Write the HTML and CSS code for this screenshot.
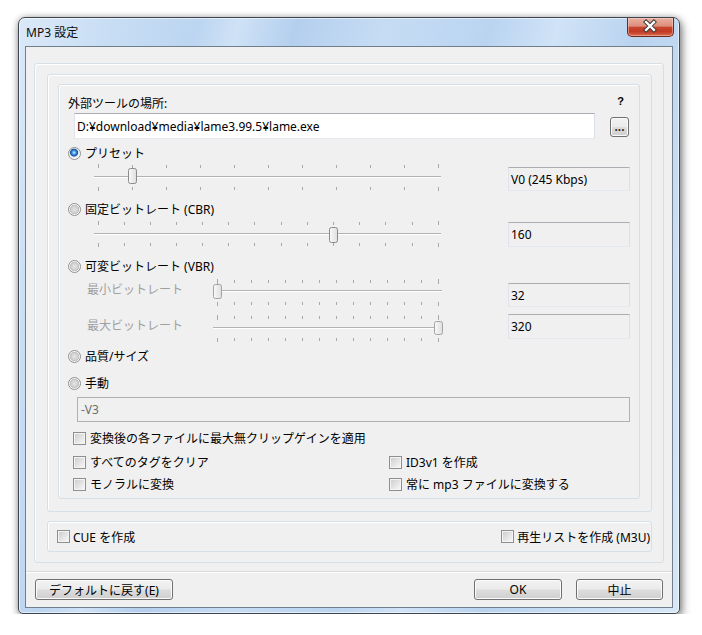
FILE: index.html
```html
<!DOCTYPE html>
<html lang="ja">
<head>
<meta charset="utf-8">
<title>MP3 設定</title>
<link rel="stylesheet" href="styles.css">
</head>
<body>
<div class="window">
  <div class="titlebar">
    <span class="title">MP3 設定</span>
    <div class="close">
      <svg width="47" height="19" viewBox="0 0 47 19">
        <path d="M19.5 5 L27.5 13 M27.5 5 L19.5 13" stroke="#3a3a3a" stroke-width="4.4" stroke-linecap="square" fill="none"/>
        <path d="M19.5 5 L27.5 13 M27.5 5 L19.5 13" stroke="#ffffff" stroke-width="2.4" stroke-linecap="square" fill="none"/>
      </svg>
    </div>
  </div>
  <div class="client">
    <div class="group frame-a">
      <div class="group frame-b">
        <div class="group frame-c">
          <div class="row r-label"><span>外部ツールの場所:</span><span class="help">?</span></div>
          <div class="row r-path">
            <div class="edit path">D:¥download¥media¥lame3.99.5¥lame.exe</div>
            <div class="btn browse"><span class="dots">...</span></div>
          </div>
          <div class="row radio-row r-radio1"><span class="radio checked"></span><span class="lbl">プリセット</span></div>
          <div class="srow s1">
            <svg class="track wide" width="358" height="30" viewBox="0 0 358 30">
              <rect x="7" y="13" width="347" height="1" fill="#b3b3b3"/>
              <rect x="7" y="14" width="347" height="1" fill="#ffffff"/>
              <g stroke="#a9a9a9" stroke-width="1">
                <path d="M11.5 1v4M45.5 2v3M79.5 2v3M113.5 2v3M147.5 2v3M181.5 2v3M215.5 2v3M249.5 2v3M283.5 2v3M317.5 2v3M351.5 1v4"/>
                <path d="M11.5 24v4M45.5 24v3M79.5 24v3M113.5 24v3M147.5 24v3M181.5 24v3M215.5 24v3M249.5 24v3M283.5 24v3M317.5 24v3M351.5 24v4"/>
              </g>
              <defs>
                <linearGradient id="th" x1="0" y1="0" x2="1" y2="0">
                  <stop offset="0" stop-color="#fafafa"/><stop offset="1" stop-color="#dedede"/>
                </linearGradient>
              </defs>
              <rect x="41.5" y="5.5" width="8" height="15" rx="2" fill="url(#th)" stroke="#8b8b8b"/>
            </svg>
            <div class="vbox b1">V0 (245 Kbps)</div>
          </div>
          <div class="row radio-row r-radio2"><span class="radio"></span><span class="lbl">固定ビットレート (CBR)</span></div>
          <div class="srow s2">
            <svg class="track wide" width="358" height="30" viewBox="0 0 358 30">
              <rect x="7" y="13" width="347" height="1" fill="#b3b3b3"/>
              <rect x="7" y="14" width="347" height="1" fill="#ffffff"/>
              <g stroke="#a9a9a9" stroke-width="1">
                <path d="M11.5 1v4M37.5 2v3M63.5 2v3M89.5 2v3M115.5 2v3M141.5 2v3M167.5 2v3M194.5 2v3M220.5 2v3M246.5 2v3M272.5 2v3M298.5 2v3M325.5 2v3M351.5 1v4"/>
                <path d="M11.5 23v4M37.5 23v3M63.5 23v3M89.5 23v3M115.5 23v3M141.5 23v3M167.5 23v3M194.5 23v3M220.5 23v3M246.5 23v3M272.5 23v3M298.5 23v3M325.5 23v3M351.5 23v4"/>
              </g>
              <rect x="242.5" y="7.5" width="8" height="15" rx="2" fill="url(#th)" stroke="#8b8b8b"/>
            </svg>
            <div class="vbox b2">160</div>
          </div>
          <div class="row radio-row r-radio3"><span class="radio"></span><span class="lbl">可変ビットレート (VBR)</span></div>
          <div class="srow s3">
            <span class="slabel l3">最小ビットレート</span>
            <svg class="track narrow" width="238" height="30" viewBox="0 0 238 30">
              <rect x="6" y="12" width="229" height="1" fill="#b3b3b3"/>
              <rect x="6" y="13" width="229" height="1" fill="#ffffff"/>
              <g stroke="#a9a9a9" stroke-width="1">
                <path d="M10.5 1v5M27.5 2v3M44.5 2v3M61.5 2v3M78.5 2v3M95.5 2v3M112.5 2v3M129.5 2v3M146.5 2v3M163.5 2v3M180.5 2v3M197.5 2v3M214.5 2v3M231.5 1v5"/>
                <path d="M10.5 24v4M27.5 24v3M44.5 24v3M61.5 24v3M78.5 24v3M95.5 24v3M112.5 24v3M129.5 24v3M146.5 24v3M163.5 24v3M180.5 24v3M197.5 24v3M214.5 24v3M231.5 24v4"/>
              </g>
              <rect x="6.5" y="6.5" width="8" height="14" rx="2" fill="url(#th)" stroke="#a3a3a3"/>
            </svg>
            <div class="vbox b3">32</div>
          </div>
          <div class="srow s4">
            <span class="slabel l4">最大ビットレート</span>
            <svg class="track narrow" width="238" height="30" viewBox="0 0 238 30">
              <rect x="6" y="15" width="229" height="1" fill="#b3b3b3"/>
              <rect x="6" y="16" width="229" height="1" fill="#ffffff"/>
              <g stroke="#a9a9a9" stroke-width="1">
                <path d="M10.5 3v5M27.5 4v3M44.5 4v3M61.5 4v3M78.5 4v3M95.5 4v3M112.5 4v3M129.5 4v3M146.5 4v3M163.5 4v3M180.5 4v3M197.5 4v3M214.5 4v3M231.5 3v5"/>
                <path d="M10.5 26v4M27.5 26v3M44.5 26v3M61.5 26v3M78.5 26v3M95.5 26v3M112.5 26v3M129.5 26v3M146.5 26v3M163.5 26v3M180.5 26v3M197.5 26v3M214.5 26v3M231.5 26v4"/>
              </g>
              <rect x="227.5" y="9.5" width="8" height="13" rx="2" fill="url(#th)" stroke="#a3a3a3"/>
            </svg>
            <div class="vbox b4">320</div>
          </div>
          <div class="row radio-row r-radio4"><span class="radio"></span><span class="lbl">品質/サイズ</span></div>
          <div class="row radio-row r-radio5"><span class="radio"></span><span class="lbl">手動</span></div>
          <div class="row r-manual"><div class="edit disabled">-V3</div></div>
          <div class="row check-row r-c1"><span class="check"></span><span class="lbl">変換後の各ファイルに最大無クリップゲインを適用</span></div>
          <div class="row check-row r-c2">
            <div class="cell"><span class="check"></span><span class="lbl">すべてのタグをクリア</span></div>
            <div class="cell right"><span class="check"></span><span class="lbl">ID3v1 を作成</span></div>
          </div>
          <div class="row check-row r-c3">
            <div class="cell"><span class="check"></span><span class="lbl">モノラルに変換</span></div>
            <div class="cell right"><span class="check"></span><span class="lbl">常に mp3 ファイルに変換する</span></div>
          </div>
        </div>
      </div>
      <div class="group cue">
        <div class="cell"><span class="check"></span><span class="lbl">CUE を作成</span></div>
        <div class="cell"><span class="check"></span><span class="lbl">再生リストを作成 (M3U)</span></div>
      </div>
    </div>
    <div class="separator"></div>
    <div class="buttons">
      <div class="btn wide">デフォルトに戻す(E)</div>
      <div class="spacer"></div>
      <div class="btn ok">OK</div>
      <div class="btn cancel">中止</div>
    </div>
  </div>
</div>
</body>
</html>
```

FILE: styles.css
```css
html, body {
  margin: 0;
  padding: 0;
  background: #ffffff;
}
body {
  font-family: "Noto Sans", "Noto Sans CJK JP", sans-serif;
  font-size: 12px;
  color: #000;
}
.window {
  box-sizing: border-box;
  margin: 17px 0 0 18px;
  width: 662px;
  height: 597px;
  border: 1px solid #3f4650;
  border-radius: 7px 7px 5px 5px;
  padding: 0 6px 5px 6px;
  background: linear-gradient(105deg, #dbe9f8 0%, #c7ddf4 12%, #bcd5f0 22%, #cfe2f6 27%, #b4cfee 34%, #c6dcf4 45%, #bad4f0 58%, #d0e3f7 66%, #b9d3ef 76%, #cadff5 88%, #d7e7f8 100%);
  box-shadow: inset 0 0 0 1px rgba(255,255,255,0.55), 2px 4px 10px rgba(0,0,0,0.45), 0 0 6px rgba(0,0,0,0.25);
}
.titlebar {
  height: 28px;
  display: flex;
  justify-content: space-between;
  align-items: flex-start;
}
.title {
  margin: 7px 0 0 1px;
  line-height: 15px;
  font-size: 12px;
  color: #0c0c0c;
}
.close {
  width: 47px;
  height: 19px;
  margin-right: -1px;
  box-sizing: border-box;
  border: 1px solid #6a2a20;
  border-top: none;
  border-radius: 0 0 5px 5px;
  background: linear-gradient(#eab0a2 0%, #dd8e7c 45%, #c8452d 52%, #c13a23 75%, #d9694c 100%);
  box-shadow: inset 0 0 0 1px rgba(255,220,210,0.45);
  display: flex;
}
.close svg { display: block; margin: -1px 0 0 -1px; }
.client {
  box-sizing: border-box;
  height: 562px;
  border: 1px solid #717f8d;
  background: #f0f0f0;
  padding: 16px 8px 0 8px;
}
.group {
  box-sizing: border-box;
  border: 1px solid #d5dfe5;
  border-radius: 3px;
  box-shadow: inset 1px 1px 0 #ffffff;
}
.frame-a {
  height: 500px;
  padding: 10px 11px 10px 12px;
}
.frame-b {
  height: 438px;
  padding: 9px 11px 12px 10px;
}
.frame-c {
  height: 415px;
  padding: 10px 9px 0 9px;
}
.row {
  display: flex;
  align-items: center;
}
.r-label {
  height: 15px;
  justify-content: space-between;
}
.help {
  font-weight: bold;
  font-family: "Liberation Sans", sans-serif;
  font-size: 11px;
  margin-right: 6px;
  margin-top: -4px;
}
.r-path {
  margin-top: 3px;
  height: 26px;
  align-items: flex-start;
}
.edit {
  box-sizing: border-box;
  border: 1px solid;
  border-color: #abadb3 #dbdfe6 #e3e9ef #e2e3ea;
  display: flex;
  align-items: center;
}
.path {
  margin-left: 6px;
  width: 521px;
  height: 26px;
  background: #fff;
  padding-left: 2px;
}
.btn {
  box-sizing: border-box;
  border: 1px solid #707070;
  border-radius: 3px;
  background: linear-gradient(#f2f2f2 0%, #ebebeb 48%, #dddddd 52%, #cfcfcf 100%);
  box-shadow: inset 0 0 0 1px #fbfbfb;
  display: flex;
  align-items: center;
  justify-content: center;
}
.browse {
  width: 19px;
  height: 20px;
  margin: 4px 0 0 15px;
  align-items: flex-start;
}
.dots {
  font-family: "Liberation Sans", sans-serif;
  font-size: 12px;
  font-weight: bold;
  line-height: 12px;
  color: #3a3020;
  margin-top: 3px;
}
.radio-row { height: 20px; }
.radio, .check {
  flex: none;
  box-sizing: border-box;
  width: 13px;
  height: 13px;
}
.radio {
  border-radius: 50%;
  border: 1px solid #8f9091;
  background: radial-gradient(circle at 50% 50%, #e4e4e4 0, #d2d2d2 3.2px, #bdbdbd 4.3px, #f7f7f7 5px);
}
.radio.checked {
  background: radial-gradient(circle at 46% 42%, #c8ecff 0, #5eb3f0 1.4px, #2a78cf 2.6px, #1b4f92 3.6px, #d9e3ec 4.3px, #f7f7f7 5px);
}
.lbl { margin-left: 4px; white-space: nowrap; }
.r-radio1 { margin-top: 4px; }
.r-radio2 { margin-top: 6px; }
.r-radio3 { margin-top: 6px; }
.r-radio4 { margin-top: 4px; }
.r-radio5 { margin-top: 7px; }
.srow {
  display: grid;
  grid-template-columns: 19px 120px 238px 1fr 122px;
  height: 30px;
  align-items: start;
}
.track { display: block; }
.track.wide { grid-column: 2 / 4; }
.track.narrow { grid-column: 3 / 4; }
.slabel {
  grid-column: 2 / 3;
  color: #a0a0a0;
  white-space: nowrap;
}
.vbox {
  grid-column: 5 / 6;
  box-sizing: border-box;
  border: 1px solid;
  border-color: #abadb3 #dbdfe6 #e3e9ef #e2e3ea;
  background: #f0f0f0;
  padding-left: 2px;
  display: flex;
  align-items: center;
  white-space: nowrap;
}
.b1 { margin-top: 4px; height: 24px; }
.s2 { margin-top: 1px; }
.b2 { margin-top: 2px; height: 25px; }
.s3 { margin-top: 2px; }
.l3 { line-height: 24px; }
.b3 { margin-top: 5px; height: 24px; }
.s4 { margin-top: 4px; }
.l4 { line-height: 28px; }
.b4 { margin-top: 2px; height: 25px; }
.r-manual {
  margin-top: 4px;
}
.edit.disabled {
  margin-left: 9px;
  flex: 1;
  height: 25px;
  border-color: #adb2b5;
  background: #f0f0f0;
  color: #6d6d6d;
  padding-left: 3px;
}
.check {
  border: 1px solid #8e8f8f;
  padding: 1px;
  background: linear-gradient(135deg, #cfcfcf, #f6f6f6) content-box, #f4f4f4;
}
.check-row { height: 20px; padding-left: 5px; }
.r-c1 { margin-top: 6px; }
.r-c2 { margin-top: 4px; }
.r-c3 { margin-top: 2px; }
.cell {
  display: flex;
  align-items: center;
}
.check-row .cell { width: 316px; }
.check-row .cell.right { width: auto; }
.cue {
  margin-top: 9px;
  height: 31px;
  padding: 0 1px 0 9px;
  display: flex;
  align-items: center;
  justify-content: space-between;
}
.cue .lbl { margin-left: 3px; }
.separator {
  margin-top: 8px;
  height: 1px;
  background: #dadada;
  border-bottom: 1px solid #ffffff;
  margin-left: -8px;
  margin-right: -8px;
}
.buttons {
  margin-top: 6px;
  display: flex;
  padding: 0 1px;
}
.buttons .btn { height: 21px; }
.btn.wide { width: 138px; }
.spacer { flex: 1; }
.btn.ok { width: 88px; }
.btn.cancel { width: 87px; margin-left: 14px; }
```
